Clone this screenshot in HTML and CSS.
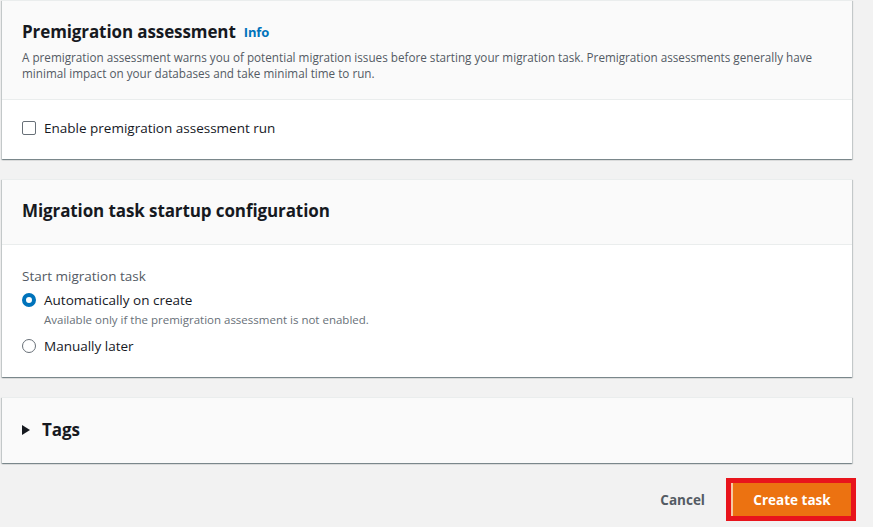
FILE: index.html
```html
<!DOCTYPE html>
<html>
<head>
<meta charset="utf-8">
<link rel="stylesheet" href="styles.css">
</head>
<body>
<div class="page">
  <section class="card">
    <div class="card-header first">
      <h2 class="title">Premigration assessment <a class="info">Info</a></h2>
      <p class="desc">A premigration assessment warns you of potential migration issues before starting your migration task. Premigration assessments generally have minimal impact on your databases and take minimal time to run.</p>
    </div>
    <div class="card-body one">
      <label class="option"><span class="checkbox"></span><span class="opt-label">Enable premigration assessment run</span></label>
    </div>
  </section>

  <section class="card">
    <div class="card-header">
      <h2 class="title">Migration task startup configuration</h2>
    </div>
    <div class="card-body two">
      <div class="field-label">Start migration task</div>
      <div class="radio-group">
        <div class="radio-item">
          <label class="option"><span class="radio checked"></span><span class="opt-label">Automatically on create</span></label>
          <div class="opt-desc">Available only if the premigration assessment is not enabled.</div>
        </div>
        <div class="radio-item">
          <label class="option"><span class="radio"></span><span class="opt-label">Manually later</span></label>
        </div>
      </div>
    </div>
  </section>

  <section class="card">
    <div class="card-header tags">
      <h2 class="title"><span class="caret"></span>Tags</h2>
    </div>
  </section>

  <div class="actions">
    <button class="btn-link">Cancel</button>
    <div class="highlight"><button class="btn-primary">Create task</button></div>
  </div>
</div>
</body>
</html>
```

FILE: styles.css
```css
* { box-sizing: border-box; }
html, body { margin: 0; padding: 0; }
body {
  background: #f2f2f2;
  font-family: "Open Sans", "Noto Sans", Arial, sans-serif;
  color: #16191f;
  width: 873px;
  height: 527px;
  overflow: hidden;
}
.page {
  width: 850px;
  margin-left: 2px;
  display: flex;
  flex-direction: column;
  gap: 20px;
}
.card {
  background: #fff;
  box-shadow: 0 1px 1px 0 rgba(0,28,36,.3), 1px 1px 1px 0 rgba(0,28,36,.15), -1px 1px 1px 0 rgba(0,28,36,.15);
  border-top: 1px solid #eaeded;
}
.card-header {
  background: #fafafa;
  padding: 20px 20px 22px;
  border-bottom: 1px solid #eaeded;
}
.card-header.first {
  padding: 20px 20px 18px;
}
.card-header.tags {
  border-bottom: none;
  padding: 21px 20px 22px;
}
.title {
  margin: 0;
  font-size: 17px;
  line-height: 22px;
  font-weight: 700;
  color: #16191f;
  display: flex;
  align-items: center;
  letter-spacing: -0.1px;
}
.info {
  color: #0073bb;
  font-size: 13px;
  font-weight: 700;
  margin-left: 8px;
}
.desc {
  margin: 6px 0 0;
  font-size: 11.7px;
  line-height: 16px;
  color: #545b64;
  max-width: 800px;
}
.card-body.one { padding: 18px 20px 21px; }
.card-body.two { padding: 21px 20px 21px; }
.option {
  display: flex;
  align-items: center;
  height: 20px;
}
.opt-label {
  font-size: 13.5px;
  color: #16191f;
  margin-left: 8px;
}
.checkbox {
  width: 14px;
  height: 14px;
  border: 1.5px solid #687078;
  border-radius: 2px;
  background: #fff;
}
.radio {
  width: 14px;
  height: 14px;
  border: 1.5px solid #687078;
  border-radius: 50%;
  background: #fff;
}
.radio.checked {
  border: 4px solid #0073bb;
}
.field-label {
  font-size: 13.5px;
  line-height: 20px;
  color: #545b64;
}
.radio-group {
  margin-top: 4px;
  display: flex;
  flex-direction: column;
  gap: 8px;
}
.opt-desc {
  margin: 2px 0 0 22px;
  font-size: 11.5px;
  line-height: 16px;
  color: #687078;
}
.caret {
  width: 0;
  height: 0;
  border-top: 5px solid transparent;
  border-bottom: 5px solid transparent;
  border-left: 8px solid #16191f;
  margin-right: 12px;
}
.actions {
  display: flex;
  justify-content: flex-end;
  align-items: center;
  margin-top: -5px;
  margin-right: -4px;
  gap: 21px;
}
.btn-link {
  background: none;
  border: none;
  font-family: inherit;
  font-size: 13.5px;
  font-weight: 700;
  color: #545b64;
  padding: 0;
}
.highlight {
  border: 5px solid #e8141c;
  padding: 0;
}
.btn-primary {
  display: block;
  width: 120px;
  height: 33px;
  background: #ec7211;
  border: none;
  border-left: 2px solid #f6c9a3;
  color: #fff;
  font-family: inherit;
  font-size: 13.5px;
  font-weight: 700;
  padding: 0;
}
```
